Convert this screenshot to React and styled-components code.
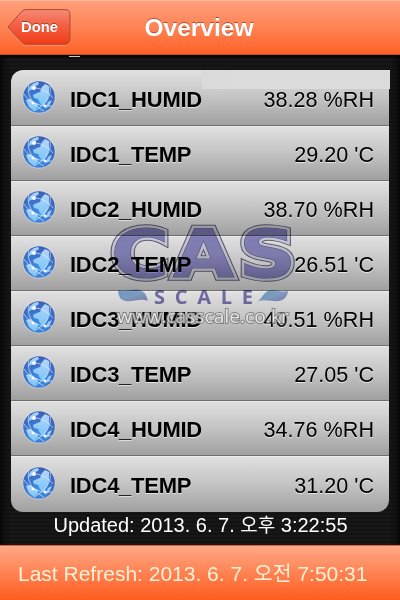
import React from "react";
import styled, { createGlobalStyle } from "styled-components";

const sensors = [
  { name: "IDC1_HUMID", value: "38.28 %RH" },
  { name: "IDC1_TEMP", value: "29.20 'C" },
  { name: "IDC2_HUMID", value: "38.70 %RH" },
  { name: "IDC2_TEMP", value: "26.51 'C" },
  { name: "IDC3_HUMID", value: "40.51 %RH" },
  { name: "IDC3_TEMP", value: "27.05 'C" },
  { name: "IDC4_HUMID", value: "34.76 %RH" },
  { name: "IDC4_TEMP", value: "31.20 'C" },
];

// left edge and stretched width of each logo letter
const logoLetters = [
  { char: "C", x: -3, width: 58 },
  { char: "A", x: 59, width: 61 },
  { char: "S", x: 125, width: 57 },
];

function Globe() {
  return (
    <GlobeIcon viewBox="0 0 34 34">
      <defs>
        <radialGradient id="ocean" cx="45%" cy="75%" r="75%">
          <stop offset="0" stopColor="#3f93e6" />
          <stop offset="0.6" stopColor="#3c72cc" />
          <stop offset="1" stopColor="#3c5fb4" />
        </radialGradient>
        <linearGradient id="land" x1="0" y1="0" x2="0" y2="1">
          <stop offset="0" stopColor="#b4d4f6" />
          <stop offset="1" stopColor="#79c6fb" />
        </linearGradient>
      </defs>
      <circle cx="17" cy="17" r="16.5" fill="#e4e9f0" opacity="0.65" />
      <circle cx="17" cy="17" r="15.8" fill="url(#ocean)" />
      <g fill="url(#land)">
        <path d="M11 15l4-2 3-1 2-5 3-3 4 2 0 4 0 5-2 6-4 5-3-3-2-4-4-1z" />
        <path d="M4 20l4-1 4 3 4 2-1 4-3 3-5-4zM26 22l4-2-3 6-4 3z" />
        <path d="M8 6l4-3 4-1 1 2-3 2-1 3-4 1-3 2z" />
      </g>
      <g fill="none" stroke="#e9f5ff" strokeWidth="0.8" opacity="0.8">
        <path d="M2 14C7 22 17 27 30 26" />
        <path d="M28 6C30 15 24 25 12 31" />
        <path d="M7 5C4 13 10 25 22 31" />
        <path d="M8 8C16 7 25 10 31 18" />
      </g>
      <g fill="#ffffff">
        <circle cx="12" cy="8" r="1.9" />
        <circle cx="11" cy="23" r="1.4" />
        <circle cx="23" cy="26" r="1.4" />
      </g>
    </GlobeIcon>
  );
}

function CasLogo() {
  return (
    <LogoArt viewBox="0 0 190 110">
      <defs>
        <linearGradient id="casFill" x1="0" y1="0" x2="0" y2="1">
          <stop offset="0" stopColor="#8380c2" />
          <stop offset="0.5" stopColor="#9c9ad6" />
          <stop offset="1" stopColor="#8380c4" />
        </linearGradient>
        <linearGradient id="leaf" x1="0" y1="0" x2="1" y2="1">
          <stop offset="0" stopColor="#78aade" />
          <stop offset="0.5" stopColor="#8fb3dc" />
          <stop offset="1" stopColor="#8f92cc" />
        </linearGradient>
      </defs>
      {logoLetters.map(({ char, x, width }) => (
        <React.Fragment key={char}>
          <Letter x={x} y="52" textLength={width} stroke="#6c6a84" strokeWidth="7.5">
            {char}
          </Letter>
          <Letter x={x} y="52" textLength={width} stroke="#e6e6f6" strokeWidth="5.6">
            {char}
          </Letter>
          <Letter x={x} y="52" textLength={width} stroke="#6a6894" strokeWidth="1.2">
            {char}
          </Letter>
        </React.Fragment>
      ))}
      <g fill="url(#leaf)">
        <path d="M4 65C13 68 20 62 28 66C32 68 33 73 34 76C24 72 15 80 7 74C5 72 4 68 4 65Z" />
        <path d="M174 66C164 68 157 62 151 68C148 71 147 74 144 76C154 73 164 80 171 73C173 71 174 68 174 66Z" />
      </g>
      <ScaleWord x="40" y="79" textLength="99">
        SCALE
      </ScaleWord>
    </LogoArt>
  );
}

function App() {
  return (
    <Screen>
      <GlobalStyle />
      <Header>
        <BackButton>
          <BackShape viewBox="0 0 64 37">
            <defs>
              <linearGradient id="back" x1="0" y1="0" x2="0" y2="1">
                <stop offset="0" stopColor="#f78b77" />
                <stop offset="0.48" stopColor="#f35d40" />
                <stop offset="1" stopColor="#f13b17" />
              </linearGradient>
            </defs>
            <path
              d="M15 2.3Q17 .6 19 .6H58Q63 .6 63 5.6V30Q63 35.2 58 35.2H19Q16.500 35.200 15 33.500L1 18Z"
              transform="translate(0 1)"
              fill="none"
              stroke="#ffb291"
              strokeOpacity=".6"
            />
            <path
              d="M15 2.3Q17 .6 19 .6H58Q63 .6 63 5.6V30Q63 35.2 58 35.2H19Q16.500 35.200 15 33.500L1 18Z"
              fill="url(#back)"
              stroke="#a9492f"
            />
          </BackShape>
          <BackLabel>Done</BackLabel>
        </BackButton>
        <Title>Overview</Title>
      </Header>
      <Body>
        <Clipped />
        <List>
          {sensors.map((sensor) => (
            <Row key={sensor.name}>
              <Globe />
              <Name>{sensor.name}</Name>
              <Value>{sensor.value}</Value>
            </Row>
          ))}
        </List>
        <Patch />
        <Watermark>
          <CasLogo />
        </Watermark>
        <SiteMark viewBox="0 0 190 24">
          <text x="3" y="17" textLength="172" lengthAdjust="spacingAndGlyphs">
            www.casscale.co.kr
          </text>
        </SiteMark>
        <Updated>
          Updated: 2013. 6. 7. <Korean $size={19}>오후</Korean> 3:22:55
        </Updated>
      </Body>
      <Footer>
        Last Refresh: 2013. 6. 7. <Korean $size={20.5}>오전</Korean> 7:50:31
      </Footer>
    </Screen>
  );
}
export default App;

const GlobalStyle = createGlobalStyle`
  * {
    box-sizing: border-box;
  }
  body {
    margin: 0;
    background: #111;
  }
`;

const Screen = styled.div`
  width: 400px;
  height: 600px;
  display: flex;
  flex-direction: column;
  overflow: hidden;
  font-family: "Liberation Sans", "Noto Sans CJK KR", sans-serif;
`;
const Header = styled.header`
  height: 55px;
  flex: none;
  display: grid;
  grid-template-columns: 70px 1fr 72px;
  align-items: center;
  padding-left: 7px;
  background: linear-gradient(#ff9f7a, #ff8355 50%, #ff6127);
  border-top: 1px solid #ffb99d;
  border-bottom: 1px solid #c94b20;
`;
const BackButton = styled.button`
  position: relative;
  width: 64px;
  height: 37px;
  padding: 0 0 2px 1px;
  border: 0;
  background: none;
  font-family: inherit;
`;
const BackShape = styled.svg`
  position: absolute;
  left: 0;
  top: 0;
  width: 64px;
  height: 37px;
`;
const BackLabel = styled.span`
  position: relative;
  color: #fff;
  font-size: 14.8px;
  font-weight: bold;
  text-shadow: 0 -1px 0 #9c3f2b;
`;
const Title = styled.h1`
  margin: 0;
  padding-right: 7px;
  text-align: center;
  color: #fff;
  font-size: 24.5px;
  line-height: 30px;
  text-shadow: 0 -1px 0 #a55338;
`;
const Body = styled.main`
  position: relative;
  height: 490px;
  flex: none;
  padding: 0 11px;
  background:
    linear-gradient(90deg, #0008, #0000 10px calc(100% - 10px), #0008),
    repeating-linear-gradient(#171717 0 2px, #121212 2px 4px);
  box-shadow: inset 0 2px 2px #000;
`;
const Clipped = styled.div`
  width: 11px;
  height: 1px;
  margin: 0 0 14px 58px;
  background: #c9c9c9;
  transform: translateY(1px);
`;
const List = styled.div`
  height: 442px;
  display: grid;
  grid-template-rows: 56px repeat(6, 55px) 56px;
  border-radius: 12px;
  overflow: hidden;
`;
const Row = styled.div`
  display: flex;
  align-items: center;
  padding: 3px 15px 0 11px;
  background: linear-gradient(#e0e0e0, #c3c3c3 50%, #a0a0a0);
  border-top: 1px solid #ececec;
  border-bottom: 1px solid #6e6e6e;
  color: #000;
  font-size: 22px;
  line-height: 26px;
  text-shadow: 0 1px 0 #e4e4e4;
  &:first-child {
    border-top-color: #e0e0e0;
  }
  &:last-child {
    padding-bottom: 1px;
    border-bottom: 0;
  }
`;
const GlobeIcon = styled.svg`
  width: 34px;
  height: 34px;
  flex: none;
  margin: -6px 14px 0 0;
`;
const Name = styled.span`
  flex: 1;
  font-weight: bold;
  letter-spacing: -0.25px;
`;
const Value = styled.span`
  font-size: 21.6px;
  white-space: nowrap;
`;
const Patch = styled.div`
  position: absolute;
  left: 202px;
  top: 15px;
  width: 188px;
  height: 19px;
  background: linear-gradient(90deg, #dcdcdc00, #dcdcdc 40px);
  background-color: #dadada;
`;
const Watermark = styled.div`
  position: absolute;
  left: 114px;
  top: 170px;
  mix-blend-mode: multiply;
`;
const LogoArt = styled.svg`
  display: block;
  width: 190px;
  height: 110px;
  overflow: visible;
`;
const Letter = styled.text.attrs({ lengthAdjust: "spacingAndGlyphs" })`
  font-family: "DejaVu Sans", sans-serif;
  font-size: 66px;
  font-weight: bold;
  fill: url(#casFill);
  paint-order: stroke;
  stroke-linejoin: miter;
`;
const ScaleWord = styled.text`
  font-family: "Open Sans", sans-serif;
  font-size: 20px;
  font-weight: 700;
  fill: #7f7cba;
`;
const SiteMark = styled.svg`
  position: absolute;
  left: 114px;
  top: 251px;
  width: 190px;
  height: 24px;
  overflow: visible;
  font-family: "Noto Sans", sans-serif;
  font-size: 18.5px;
  fill: #ececec;
  stroke: #6c6c6c;
  stroke-width: 1.8px;
  paint-order: stroke;
  opacity: 0.8;
`;
const Updated = styled.div`
  margin: 0 -11px;
  padding: 1px 0 0 1px;
  height: 30px;
  color: #fff;
  font-size: 20px;
  line-height: 24px;
  text-align: center;
  white-space: nowrap;
`;
const Korean = styled.span`
  font-family: "Noto Sans CJK KR", sans-serif;
  font-size: ${(props) => props.$size}px;
  line-height: 1;
`;
const Footer = styled.footer`
  height: 55px;
  flex: none;
  padding: 15px 18px 0;
  background: linear-gradient(#ffa986, #ff8252 50%, #ff5c1e);
  border-top: 1px solid #d96540;
  color: #fff1d8;
  font-size: 21px;
  line-height: 26px;
  white-space: nowrap;
`;
